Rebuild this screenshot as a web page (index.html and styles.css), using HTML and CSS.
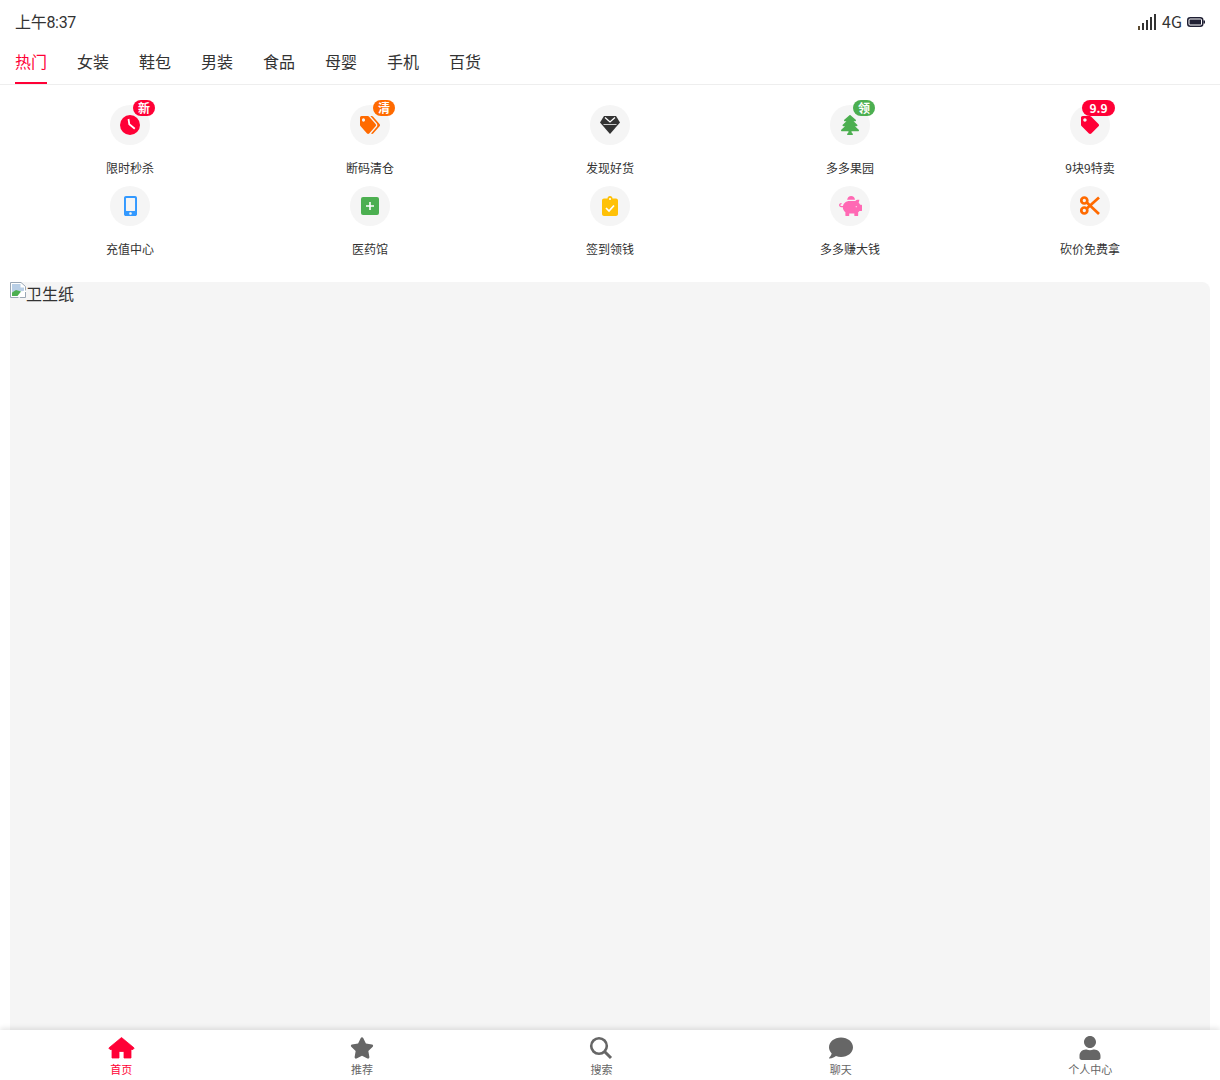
FILE: index.html
```html
<!DOCTYPE html>
<html lang="zh-CN">
<head>
    <meta charset="UTF-8">
    <meta name="viewport" content="width=device-width, initial-scale=1.0">
    <title>首页</title>
    <link rel="stylesheet" href="styles.css">
</head>
<body>
    <div class="app">
        <div class="status-bar">
            <span class="time">上午8:37</span>
            <div class="status-right">
                <svg class="signal" viewBox="0 0 20 16" width="20" height="16">
                    <rect x="1" y="12" width="2" height="4" fill="#5c4a30"/>
                    <rect x="5" y="9" width="2" height="7" fill="#333"/>
                    <rect x="9" y="6" width="2" height="10" fill="#333"/>
                    <rect x="13" y="3" width="2" height="13" fill="#333"/>
                    <rect x="17" y="0" width="2" height="16" fill="#333"/>
                </svg>
                <span>4G</span>
                <svg class="battery" viewBox="0 0 18 10" width="18" height="10">
                    <rect x="0.75" y="0.75" width="15" height="8.5" rx="2.5" fill="none" stroke="#1f1f33" stroke-width="1.5"/>
                    <rect x="2.5" y="2.5" width="11.5" height="5" fill="#1f1f33"/>
                    <rect x="16.5" y="3.5" width="1.5" height="3" fill="#1f1f33"/>
                </svg>
            </div>
        </div>

        <nav class="tabs">
            <a class="tab active">热门</a>
            <a class="tab">女装</a>
            <a class="tab">鞋包</a>
            <a class="tab">男装</a>
            <a class="tab">食品</a>
            <a class="tab">母婴</a>
            <a class="tab">手机</a>
            <a class="tab">百货</a>
        </nav>

        <main class="content">
            <div class="menu-grid">
                <div class="menu-item">
                    <div class="menu-icon">
                        <svg width="20" height="20" viewBox="0 0 20 20">
                            <circle cx="10" cy="10" r="10" fill="#ff0036"/>
                            <path fill="none" stroke="#fff" stroke-width="1.800" d="M8.500 4L9.300 9.300L14.800 13.800"/>
                        </svg>
                        <span class="badge badge-red">新</span>
                    </div>
                    <p class="menu-label">限时秒杀</p>
                </div>
                <div class="menu-item">
                    <div class="menu-icon">
                        <svg width="20" height="18" viewBox="0 0 640 512" preserveAspectRatio="none"><path fill="#ff6a00" d="M497.941 225.941L286.059 14.059A48 48 0 0 0 252.118 0H48C21.49 0 0 21.49 0 48v204.118a48 48 0 0 0 14.059 33.941l211.882 211.882c18.744 18.745 49.136 18.746 67.882 0l204.118-204.118c18.745-18.745 18.745-49.137 0-67.882zM112 160c-26.51 0-48-21.49-48-48s21.49-48 48-48 48 21.49 48 48-21.49 48-48 48zm513.941 133.823L421.823 497.941c-18.745 18.745-49.137 18.745-67.882 0l-.36-.36L527.64 323.522c16.999-16.999 26.36-39.6 26.36-63.64s-9.362-46.641-26.36-63.64L331.397 0h48.721a48 48 0 0 1 33.941 14.059l211.882 211.882c18.745 18.745 18.745 49.137 0 67.882z"/></svg>
                        <span class="badge badge-orange">清</span>
                    </div>
                    <p class="menu-label">断码清仓</p>
                </div>
                <div class="menu-item">
                    <div class="menu-icon">
                        <svg width="20" height="18" viewBox="0 0 20 18">
                            <path fill="#333" d="M4 0H16L20 6.500 10 18 0 6.500Z"/>
                            <path fill="none" stroke="#fff" stroke-width="1.300" d="M5 1.500L10 6 15 1.500"/>
                            <path fill="none" stroke="#ccc" stroke-width="1" d="M3.500 8.500H16.500"/>
                        </svg>
                    </div>
                    <p class="menu-label">发现好货</p>
                </div>
                <div class="menu-item">
                    <div class="menu-icon">
                        <svg width="18" height="20" viewBox="0 0 384 512" preserveAspectRatio="none"><path fill="#4caf50" d="M378.31 378.49L298.42 288h30.63c9.01 0 16.98-5 20.78-13.06 3.8-8.04 2.55-17.26-3.28-24.05L268.42 160h28.89c9.1 0 17.3-5.35 20.86-13.61 3.52-8.13 1.86-17.59-4.24-24.08L203.66 4.83c-6.03-6.45-17.28-6.45-23.32 0L70.06 122.31c-6.1 6.49-7.75 15.95-4.24 24.08C69.38 154.65 77.59 160 86.69 160h28.89l-78.14 90.91c-5.81 6.78-7.06 15.99-3.27 24.04C37.97 283 45.93 288 54.95 288h30.63L5.69 378.49c-6 6.79-7.36 16.09-3.56 24.26 3.75 8.05 12 13.25 21.01 13.25H160v24.45l-30.29 48.4c-5.32 10.64 2.42 23.16 14.31 23.16h95.96c11.89 0 19.63-12.52 14.31-23.16L224 440.45V416h136.86c9.01 0 17.26-5.2 21.01-13.25 3.8-8.17 2.44-17.47-3.56-24.26z"/></svg>
                        <span class="badge badge-green">领</span>
                    </div>
                    <p class="menu-label">多多果园</p>
                </div>
                <div class="menu-item">
                    <div class="menu-icon">
                        <svg width="18" height="18" viewBox="0 0 512 512"><path fill="#ff0036" d="M0 252.118V48C0 21.49 21.49 0 48 0h204.118a48 48 0 0 1 33.941 14.059l211.882 211.882c18.745 18.745 18.745 49.137 0 67.882L293.823 497.941c-18.745 18.745-49.137 18.745-67.882 0L14.059 286.059A48 48 0 0 1 0 252.118zM112 64c-26.51 0-48 21.49-48 48s21.49 48 48 48 48-21.490 48-48-21.490-48-48-48z"/></svg>
                        <span class="badge badge-red badge-wide">9.9</span>
                    </div>
                    <p class="menu-label">9块9特卖</p>
                </div>

                <div class="menu-item">
                    <div class="menu-icon">
                        <svg width="13" height="20" viewBox="0 0 320 512" preserveAspectRatio="none"><path fill="#3399ff" d="M272 0H48C21.5 0 0 21.5 0 48v416c0 26.5 21.5 48 48 48h224c26.5 0 48-21.5 48-48V48c0-26.5-21.5-48-48-48zM160 480c-17.7 0-32-14.3-32-32s14.3-32 32-32 32 14.3 32 32-14.3 32-32 32zm112-108c0 6.6-5.4 12-12 12H60c-6.6 0-12-5.400-12-12V60c0-6.600 5.400-12 12-12h200c6.600 0 12 5.400 12 12v312z"/></svg>
                    </div>
                    <p class="menu-label">充值中心</p>
                </div>
                <div class="menu-item">
                    <div class="menu-icon">
                        <svg width="18" height="18" viewBox="0 0 18 18">
                            <rect width="18" height="18" rx="2" fill="#4caf50"/>
                            <path fill="none" stroke="#fff" stroke-width="1.600" d="M5 9H13M9 5V13"/>
                        </svg>
                    </div>
                    <p class="menu-label">医药馆</p>
                </div>
                <div class="menu-item">
                    <div class="menu-icon">
                        <svg width="16" height="20" viewBox="0 0 16 20">
                            <path fill="#ffc107" d="M2 2.500H5.500C5.500 1 6.500 0 8 0S10.500 1 10.500 2.500H14C15.100 2.500 16 3.400 16 4.500V18C16 19.100 15.100 20 14 20H2C.9 20 0 19.100 0 18V4.500C0 3.400 .9 2.500 2 2.500Z"/>
                            <circle cx="8" cy="3" r="1" fill="#fff"/>
                            <path fill="none" stroke="#fff" stroke-width="1.700" d="M4 12L7 15L12 9.500"/>
                        </svg>
                    </div>
                    <p class="menu-label">签到领钱</p>
                </div>
                <div class="menu-item">
                    <div class="menu-icon">
                        <svg width="23" height="20" viewBox="0 0 576 512" preserveAspectRatio="none"><path fill="#ff69b4" d="M560 224h-29.5c-8.8-20-21.6-37.7-37.5-52.5L512 96h-32c-29.4 0-55.4 13.5-73 34.3-7.6-1.1-15.1-2.3-23-2.3H256c-77.4 0-141.9 55-156.8 128H56c-14.8 0-26.5-13.5-23.5-28.8C34.7 215.8 45.4 208 57 208h1c3.3 0 6-2.7 6-6v-20c0-3.3-2.7-6-6-6-28.500 0-53.900 20.400-57.500 48.600C-3.900 258.800 22.700 288 56 288h40c0 52.200 25.400 98.100 64 127.300V496c0 8.800 7.200 16 16 16h64c8.800 0 16-7.200 16-16v-48h128v48c0 8.800 7.200 16 16 16h64c8.800 0 16-7.200 16-16v-80.700c11.800-8.900 22.300-19.400 31.300-31.300H560c8.800 0 16-7.200 16-16V240c0-8.800-7.200-16-16-16zm-128 64c-8.800 0-16-7.200-16-16s7.200-16 16-16 16 7.200 16 16-7.200 16-16 16zM256 96h128c5.400 0 10.700.4 15.900.8 0-.3.1-.5.1-.8 0-53-43-96-96-96s-96 43-96 96c0 2.100.5 4.100.6 6.200 15.200-3.900 31-6.200 47.400-6.200z"/></svg>
                    </div>
                    <p class="menu-label">多多赚大钱</p>
                </div>
                <div class="menu-item">
                    <div class="menu-icon">
                        <svg width="20" height="20" viewBox="0 0 20 20">
                            <g fill="none" stroke="#ff6a00" stroke-width="2.700">
                                <circle cx="4.300" cy="4.500" r="3"/>
                                <circle cx="4.300" cy="14.500" r="3"/>
                                <path d="M6.800 6.500L19 18M6.800 12.500L19 1.500"/>
                            </g>
                        </svg>
                    </div>
                    <p class="menu-label">砍价免费拿</p>
                </div>
            </div>

            <div class="banner">
                <svg class="broken-img" width="16" height="16" viewBox="0 0 16 16">
                    <path fill="#fff" stroke="#9aa7b5" d="M0.500 0.500H11L15.500 4.500V15.500H0.500Z"/>
                    <path fill="#b9cfe6" d="M2 2H10.500V5.500H14V9L2 10Z"/>
                    <path fill="#4caf50" d="M2 14V10.500L6 8L11 9.500L7.500 14Z"/>
                    <path fill="none" stroke="#fff" stroke-width="1.800" d="M8.500 15.500L15.500 8.500"/>
                </svg><span>卫生纸</span>
            </div>
        </main>

        <nav class="bottom-nav">
            <a class="nav-item active">
                <svg class="nav-home" viewBox="0 0 27 24"><path stroke="#ff0036" stroke-width="0.800" stroke-linejoin="round" d="M13.500 1.500L0.800 12L2 13.500H4V22H11V15.500H16V22H23V13.500H25L26.200 12Z"/></svg>
                <span>首页</span>
            </a>
            <a class="nav-item">
                <svg viewBox="0 0 576 512"><path d="M259.3 17.8L194 150.2 47.9 171.5c-26.2 3.8-36.7 36.1-17.7 54.6l105.7 103-25 145.5c-4.5 26.3 23.2 46 46.4 33.7L288 439.6l130.7 68.7c23.2 12.2 50.9-7.4 46.4-33.7l-25-145.5 105.7-103c19-18.5 8.5-50.8-17.7-54.6L382 150.2 316.7 17.8c-11.7-23.6-45.6-23.9-57.400 0z"/></svg>
                <span>推荐</span>
            </a>
            <a class="nav-item">
                <svg viewBox="0 0 24 24">
                    <circle cx="10" cy="10" r="7.800" fill="none" stroke="#666" stroke-width="2.600"/>
                    <path fill="none" stroke="#666" stroke-width="3" d="M15.500 15.500L22 22"/>
                </svg>
                <span>搜索</span>
            </a>
            <a class="nav-item">
                <svg viewBox="0 0 512 512"><path d="M256 32C114.6 32 0 125.1 0 240c0 49.6 21.4 95 57 130.7C44.5 421.1 2.7 466 2.2 466.5c-2.2 2.3-2.8 5.7-1.5 8.7S4.800 480 8 480c66.300 0 116-31.800 140.600-51.400 32.700 12.300 69 19.400 107.400 19.400 141.400 0 256-93.100 256-208S397.400 32 256 32z"/></svg>
                <span>聊天</span>
            </a>
            <a class="nav-item">
                <svg viewBox="0 0 448 512"><path d="M224 256c70.700 0 128-57.300 128-128S294.700 0 224 0 96 57.300 96 128s57.300 128 128 128zm89.600 32h-16.700c-22.200 10.200-46.900 16-72.900 16s-50.600-5.800-72.900-16h-16.700C60.200 288 0 348.200 0 422.400V464c0 26.500 21.500 48 48 48h352c26.500 0 48-21.500 48-48v-41.600c0-74.200-60.200-134.400-134.400-134.400z"/></svg>
                <span>个人中心</span>
            </a>
        </nav>
    </div>
</body>
</html>
```

FILE: styles.css
```css
* {
    box-sizing: border-box;
}
body {
    margin: 0;
    font-family: "Noto Sans CJK SC", "Open Sans", sans-serif;
    color: #333;
    background-color: white;
}
.app {
    display: flex;
    flex-direction: column;
    height: 100vh;
    overflow: hidden;
}
.status-bar {
    display: flex;
    justify-content: space-between;
    align-items: center;
    height: 44px;
    padding: 0 15px 2px;
    font-size: 16px;
    flex-shrink: 0;
}
.time {
    font-family: Roboto, "Noto Sans CJK SC", sans-serif;
    letter-spacing: -0.3px;
}
.status-right {
    display: flex;
    align-items: center;
    gap: 5px;
}
.status-right svg {
    margin-top: 2px;
}
.tabs {
    display: flex;
    gap: 30px;
    height: 41px;
    padding: 0 15px;
    border-bottom: 1px solid #eee;
    flex-shrink: 0;
}
.tab {
    height: 40px;
    font-size: 16px;
    line-height: 35px;
}
.tab.active {
    color: #ff0036;
    border-bottom: 2px solid #ff0036;
}
.content {
    flex: 1;
    min-height: 0;
    padding: 20px 10px 0;
    overflow: hidden;
}
.menu-grid {
    display: grid;
    grid-template-columns: repeat(5, 1fr);
    row-gap: 11px;
    margin-bottom: 26px;
}
.menu-item {
    display: flex;
    flex-direction: column;
    align-items: center;
}
.menu-icon {
    position: relative;
    display: flex;
    justify-content: center;
    align-items: center;
    width: 40px;
    height: 40px;
    border-radius: 50%;
    background-color: #f5f5f5;
}
.menu-label {
    margin: 15px 0 0;
    font-size: 12px;
    line-height: 15px;
}
.badge {
    position: absolute;
    top: -5px;
    right: -5px;
    height: 16px;
    padding: 0 5px;
    border-radius: 8px;
    color: white;
    font-size: 12px;
    font-weight: bold;
    line-height: 16px;
}
.badge-wide {
    padding: 0 7.5px;
}
.badge-red {
    background-color: #ff0036;
}
.badge-orange {
    background-color: #ff6a00;
}
.badge-green {
    background-color: #4caf50;
}
.banner {
    height: 900px;
    border-radius: 8px;
    background-color: #f5f5f5;
    font-size: 16px;
    line-height: 22px;
}
.broken-img {
    vertical-align: top;
}
.bottom-nav {
    position: relative;
    display: flex;
    justify-content: space-around;
    height: 50px;
    padding-top: 6px;
    background-color: white;
    box-shadow: 0 -2px 5px rgba(0, 0, 0, 0.1);
    flex-shrink: 0;
}
.nav-item {
    display: flex;
    flex-direction: column;
    align-items: center;
    color: #666;
    font-size: 11px;
    line-height: 13px;
}
.nav-item svg {
    width: 24px;
    height: 24px;
    margin-bottom: 3px;
    fill: #666;
}
.nav-item svg.nav-home {
    width: 27px;
}
.nav-item.active {
    color: #ff0036;
}
.nav-item.active svg {
    fill: #ff0036;
}
```
